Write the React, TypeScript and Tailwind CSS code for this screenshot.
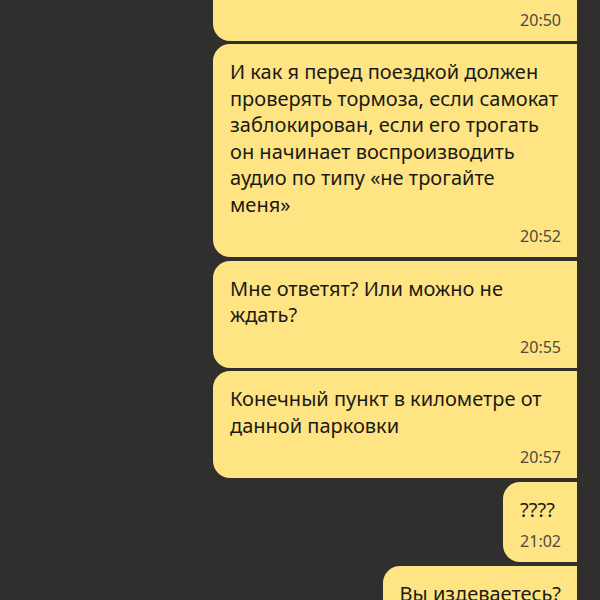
const messages = [
  { lines: ["Пишу уже третий раз, никто не отвечает"], time: "20:50" },
  {
    lines: [
      "И как я перед поездкой должен",
      "проверять тормоза, если самокат",
      "заблокирован, если его трогать",
      "он начинает воспроизводить",
      "аудио по типу «не трогайте",
      "меня»",
    ],
    time: "20:52",
  },
  { lines: ["Мне ответят? Или можно не", "ждать?"], time: "20:55" },
  { lines: ["Конечный пункт в километре от", "данной парковки"], time: "20:57" },
  { lines: ["????"], time: "21:02" },
  { lines: ["Вы издеваетесь?"], time: "21:03" },
];

function Bubble({ lines, time, wide }: { lines: string[]; time: string; wide: boolean }) {
  return (
    <div
      className={
        "flex flex-col bg-[#fee483] rounded-l-[17px] pl-[17px] pr-[16px] pt-[15px] pb-[11px] " +
        (wide ? "w-[364px]" : "")
      }
    >
      <p className="text-[20px] leading-[26.5px] text-[#1b1a17] whitespace-nowrap">
        {lines.map((l, i) => (
          <span key={i} className="block">
            {l}
          </span>
        ))}
      </p>
      <span className="self-end mt-[8px] text-[16px] leading-[20px] text-[#4d4a42]">{time}</span>
    </div>
  );
}

export default function App() {
  return (
    <div
      className="w-[600px] h-[600px] overflow-hidden bg-[#302f2d]"
      style={{ fontFamily: '"Noto Sans", sans-serif' }}
    >
      <div className="flex flex-col items-end gap-[3.5px] pr-[23px] -mt-[40px]">
        {messages.map((m, i) => (
          <Bubble key={i} lines={m.lines} time={m.time} wide={m.lines.length > 1 || i === 0} />
        ))}
      </div>
    </div>
  );
}
